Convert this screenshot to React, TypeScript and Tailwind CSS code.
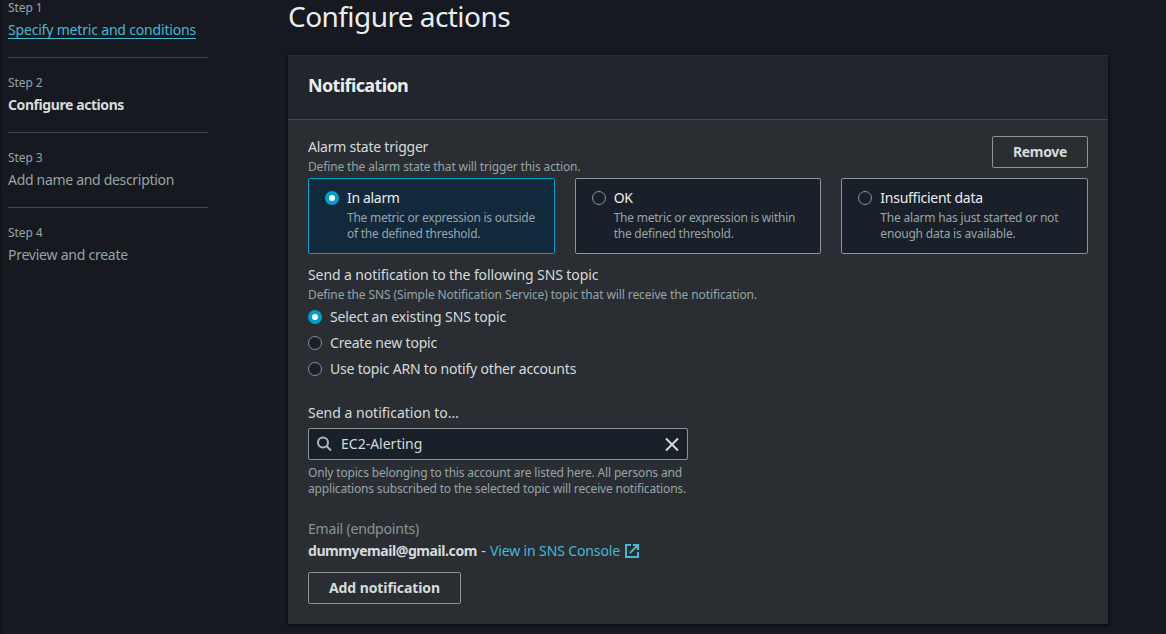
import type { ReactNode } from "react";

function Step({
  label,
  children,
  last = false,
}: {
  label: string;
  children: ReactNode;
  last?: boolean;
}) {
  return (
    <li className={last ? "" : "mb-[17px] border-b border-[#414750] pb-4"}>
      <div className="text-xs leading-4 tracking-[-0.1px] text-[#95a5a6]">{label}</div>
      <div className="mt-[3px] leading-[22px]">{children}</div>
    </li>
  );
}

function Radio({ checked = false }: { checked?: boolean }) {
  return (
    <svg width="14" height="14" viewBox="0 0 14 14" className="mt-1 shrink-0">
      {checked ? (
        <>
          <circle cx="7" cy="7" r="7" fill="#00a1c9" />
          <circle cx="7" cy="7" r="3" fill="#ffffff" />
        </>
      ) : (
        <circle cx="7" cy="7" r="6.5" fill="#1a2029" stroke="#879596" />
      )}
    </svg>
  );
}

function Tile({
  title,
  children,
  checked = false,
}: {
  title: ReactNode;
  children: ReactNode;
  checked?: boolean;
}) {
  return (
    <div
      className={`flex h-[76px] gap-2 rounded-[2px] border pt-2 pl-4 ${
        checked ? "border-[#00a1c9] bg-[#12293b]" : "border-[#879596] bg-[#1a2029]"
      }`}
    >
      <Radio checked={checked} />
      <div>
        <div className="leading-[22px] text-[#eaeded]">{title}</div>
        <div className="mt-px text-xs leading-4 whitespace-nowrap text-[#95a5a6]">{children}</div>
      </div>
    </div>
  );
}

function Option({ children, checked = false }: { children: ReactNode; checked?: boolean }) {
  return (
    <div className="flex gap-2 leading-[22px]">
      <Radio checked={checked} />
      {children}
    </div>
  );
}

function Button({ children, className }: { children: ReactNode; className: string }) {
  return (
    <button
      className={`h-8 rounded-[2px] border border-[#879596] font-bold whitespace-nowrap ${className}`}
    >
      {children}
    </button>
  );
}

export default function App() {
  return (
    <div className="flex h-[634px] overflow-hidden bg-[#16191f] font-['Noto_Sans',sans-serif] text-sm leading-[22px] text-[#d5dbdb]">
      <nav className="w-[288px] shrink-0 border-l border-[#0f1216] pr-20 pl-[7px]">
        <ol>
          <Step label="Step 1">
            <a className="inline-block h-5 border-b border-[#44b9d6] tracking-[-0.18px] whitespace-nowrap text-[#44b9d6]">
              Specify metric and conditions
            </a>
          </Step>
          <Step label="Step 2">
            <span className="font-bold tracking-[-0.42px]">Configure actions</span>
          </Step>
          <Step label="Step 3">
            <span className="tracking-[-0.31px] text-[#95a5a6]">Add name and description</span>
          </Step>
          <Step label="Step 4" last>
            <span className="tracking-[-0.24px] text-[#95a5a6]">Preview and create</span>
          </Step>
        </ol>
      </nav>

      <main className="w-[820px] shrink-0">
        <h1 className="h-[55px] text-[28px] leading-[32px] tracking-[-0.56px] text-[#eaeded]">
          Configure actions
        </h1>

        <section className="h-[569px] border-t border-[#2a2e33] bg-[#2a2e33] shadow-[0_1px_2px_1px_rgba(0,0,0,0.5)]">
          <header className="flex h-16 items-center border-b border-[#414750] bg-[#21252c] px-5">
            <h2 className="mb-[5px] text-lg leading-[22px] font-bold tracking-[-0.63px] text-[#eaeded]">
              Notification
            </h2>
          </header>

          <div className="px-5 pt-4">
            <div className="flex justify-between">
              <div>
                <div className="tracking-[-0.23px]">Alarm state trigger</div>
                <div className="mt-px text-xs leading-4 tracking-[-0.14px] text-[#95a5a6]">
                  Define the alarm state that will trigger this action.
                </div>
              </div>
              <Button className="w-24 tracking-[-0.33px]">Remove</Button>
            </div>

            <div className="mt-[3px] grid grid-cols-3 gap-5">
              <Tile checked title={<span className="tracking-[-0.33px]">In alarm</span>}>
                <span className="tracking-[-0.25px]">
                  The metric or expression is outside
                  <br />
                  of the defined threshold.
                </span>
              </Tile>
              <Tile title={<span className="tracking-[-0.28px]">OK</span>}>
                <span className="tracking-[-0.23px]">
                  The metric or expression is within
                  <br />
                  the defined threshold.
                </span>
              </Tile>
              <Tile title={<span className="tracking-[-0.26px]">Insufficient data</span>}>
                <span className="tracking-[-0.19px]">
                  The alarm has just started or not
                  <br />
                  enough data is available.
                </span>
              </Tile>
            </div>

            <div className="mt-[10px] tracking-[-0.1px]">
              Send a notification to the following SNS topic
            </div>
            <div className="mt-px text-xs leading-4 tracking-[-0.105px] text-[#95a5a6]">
              Define the SNS (Simple Notification Service) topic that will receive the notification.
            </div>

            <div className="mt-[3px] flex flex-col gap-1">
              <Option checked>
                <span className="tracking-[-0.13px]">Select an existing SNS topic</span>
              </Option>
              <Option>
                <span className="tracking-[-0.19px]">Create new topic</span>
              </Option>
              <Option>
                <span className="tracking-[-0.19px]">Use topic ARN to notify other accounts</span>
              </Option>
            </div>

            <div className="mt-[22px]">Send a notification to…</div>
            <div className="mt-1 flex h-8 w-[380px] items-center rounded-[2px] border border-[#879596] bg-[#1a2029] px-2">
              <svg width="16" height="16" viewBox="0 0 16 16" fill="none" stroke="#b0b9ba" strokeWidth="2">
                <circle cx="6" cy="6.5" r="5" />
                <path d="M9.5 10l4.5 4.5" />
              </svg>
              <span className="ml-2 flex-1">EC2-Alerting</span>
              <svg width="14" height="14" viewBox="0 0 14 14" fill="none" stroke="#d5dbdb" strokeWidth="2">
                <path d="M1 1.5l12 12M13 1.5L1 13.5" />
              </svg>
            </div>
            <div className="mt-[5px] text-xs leading-4 tracking-[-0.175px] whitespace-nowrap text-[#95a5a6]">
              Only topics belonging to this account are listed here. All persons and
              <br />
              applications subscribed to the selected topic will receive notifications.
            </div>

            <div className="mt-[21px] tracking-[-0.19px] text-[#879596]">Email (endpoints)</div>
            <div className="flex items-center whitespace-pre">
              <span className="font-bold tracking-[-0.42px]">dummyemail@gmail.com</span>
              <span className="w-[13px] text-center"> - </span>
              <a className="tracking-[-0.13px] text-[#44b9d6]">View in SNS Console</a>
              <svg
                width="14"
                height="14"
                viewBox="0 0 14 14"
                fill="none"
                stroke="#44b9d6"
                strokeWidth="2"
                className="ml-[5px]"
              >
                <path d="M6 1H1v12h12V8M8 1h5v5M13 1L5 9" />
              </svg>
            </div>
            <Button className="mt-[10px] w-[153px] tracking-[-0.09px]">Add notification</Button>
          </div>
        </section>
      </main>
    </div>
  );
}
